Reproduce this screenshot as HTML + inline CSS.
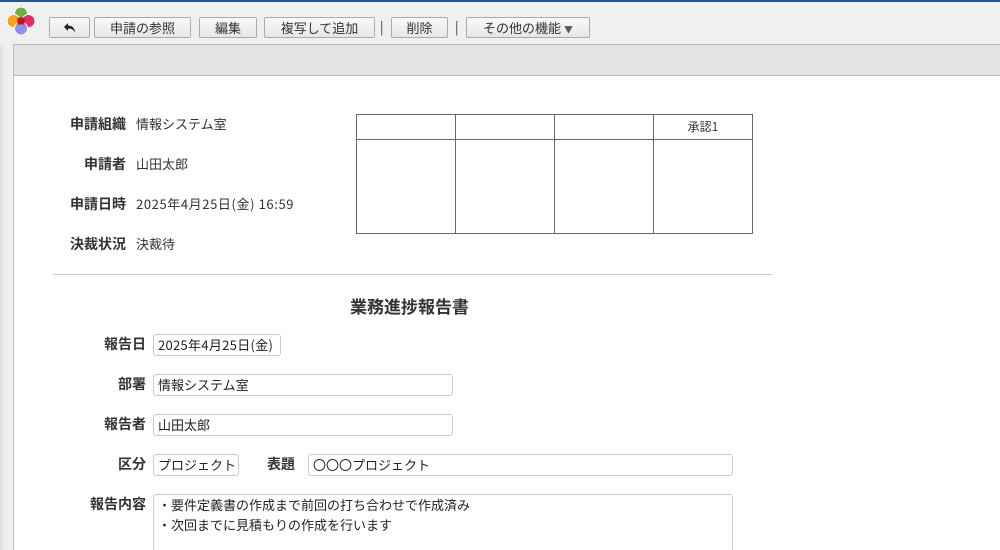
<!DOCTYPE html>
<html><head><meta charset="utf-8"><style>
*{margin:0;padding:0;box-sizing:border-box}
html,body{width:1000px;height:550px;overflow:hidden}
body{background:#fff;font-family:"Noto Sans CJK JP","Liberation Sans",sans-serif;font-size:13px;line-height:18px;color:#333;position:relative}
.a{position:absolute}
.btn{position:absolute;top:17px;height:21px;border:1px solid #aaa;border-radius:2px;background:linear-gradient(#fafafa,#e6e6e6);font-size:13px;text-align:center;line-height:19px;color:#333}
.sep{position:absolute;top:18px;font-size:13px;color:#333}
.lbl{position:absolute;font-weight:bold;font-size:14px;text-align:right;color:#333}
.val{position:absolute}
.dt{letter-spacing:0.6px}
.inp{position:absolute;height:22px;border:1px solid #ccc;border-radius:3px;padding-left:4px;line-height:20px;font-size:13px;color:#222}
table{position:absolute;left:356px;top:114px;border-collapse:collapse}
td{border:1px solid #666;width:99px;font-size:12px;text-align:center;line-height:16px}
</style></head><body>
<div class="a" style="left:0;top:0;width:1000px;height:45px;background:#f0f0f0"></div>
<div class="a" style="left:0;top:0;width:1000px;height:2px;background:#1e56a0"></div>
<div class="a" style="left:0;top:45px;width:13px;height:505px;background:linear-gradient(90deg,#ddd,#f0f0f0 40%,#f0f0f0)"></div>
<div class="a" style="left:13px;top:44px;width:987px;height:32px;background:#e4e4e4;border:1px solid #bbb;border-right:none"></div>
<div class="a" style="left:13px;top:76px;width:1px;height:474px;background:#bbb"></div>
<svg class="a" style="left:5px;top:5px" width="32" height="32" viewBox="0 0 32 32">
<g stroke="#fff" stroke-width="1"><circle cx="16" cy="8.5" r="6.5" fill="#6cb33a"/><circle cx="8.5" cy="16" r="6.5" fill="#f7a21b"/><circle cx="23.5" cy="16" r="6.5" fill="#e8286a"/><circle cx="16" cy="23.5" r="6.5" fill="#8a90ef"/></g><rect x="12.5" y="12.5" width="7" height="7" fill="#c4101a"/></svg>
<div class="btn" style="left:49px;width:41px"><svg width="14" height="12" viewBox="0 0 14 12" style="vertical-align:-1px"><path d="M5 1 L1 5 L5 9 V6.5 C9 6.5 11 8 12 11 C12 6 9 3.5 5 3.5Z" fill="#222"/></svg></div>
<div class="btn" style="left:94px;width:97px">申請の参照</div>
<div class="btn" style="left:199px;width:58px">編集</div>
<div class="btn" style="left:264px;width:111px">複写して追加</div>
<div class="sep" style="left:380px">|</div>
<div class="btn" style="left:391px;width:57px">削除</div>
<div class="sep" style="left:455px">|</div>
<div class="btn" style="left:466px;width:124px">その他の機能 <span style="font-size:9px;color:#556">▼</span></div>

<div class="lbl" style="left:50px;width:76px;top:115px">申請組織</div><div class="val" style="left:136px;top:115px">情報システム室</div>
<div class="lbl" style="left:50px;width:76px;top:155px">申請者</div><div class="val" style="left:136px;top:155px">山田太郎</div>
<div class="lbl" style="left:50px;width:76px;top:195px">申請日時</div><div class="val dt" style="left:136px;top:195px">2025年4月25日(金) 16:59</div>
<div class="lbl" style="left:50px;width:76px;top:235px">決裁状況</div><div class="val" style="left:136px;top:235px">決裁待</div>
<table><tr style="height:25px"><td></td><td></td><td></td><td>承認1</td></tr><tr style="height:94px"><td></td><td></td><td></td><td></td></tr></table>
<div class="a" style="left:53px;top:274px;width:720px;height:1px;background:#ccc"></div>
<div class="a" style="left:350px;top:295px;font-size:17px;line-height:22px;font-weight:bold;color:#333">業務進捗報告書</div>
<div class="lbl" style="left:70px;width:76px;top:335px">報告日</div><div class="inp dt" style="left:153px;top:334px;width:128px;letter-spacing:0.3px">2025年4月25日(金)</div>
<div class="lbl" style="left:70px;width:76px;top:375px">部署</div><div class="inp" style="left:153px;top:374px;width:300px">情報システム室</div>
<div class="lbl" style="left:70px;width:76px;top:415px">報告者</div><div class="inp" style="left:153px;top:414px;width:300px">山田太郎</div>
<div class="lbl" style="left:70px;width:76px;top:455px">区分</div><div class="inp" style="left:153px;top:454px;width:86px;overflow:hidden;white-space:nowrap">プロジェクト</div>
<div class="lbl" style="left:250px;width:45px;top:455px">表題</div><div class="inp" style="left:308px;top:454px;width:425px">〇〇〇プロジェクト</div>
<div class="lbl" style="left:70px;width:76px;top:495px">報告内容</div>
<div class="inp" style="left:153px;top:494px;width:580px;height:70px;line-height:20px;padding-top:0">・要件定義書の作成まで前回の打ち合わせで作成済み<br>・次回までに見積もりの作成を行います</div>
</body></html>
